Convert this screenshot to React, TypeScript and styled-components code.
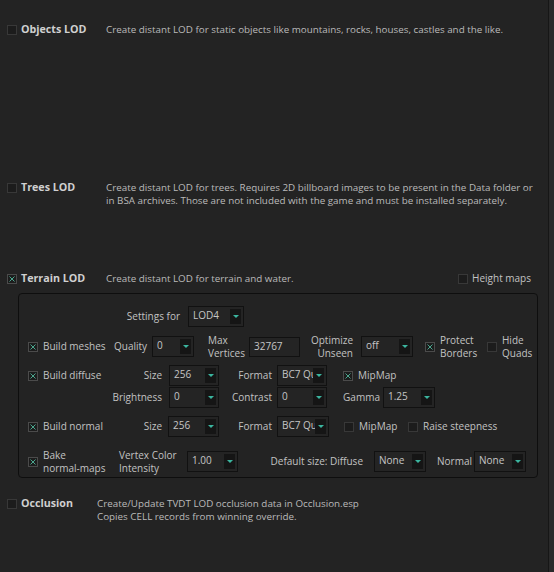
import React from "react";
import styled, { createGlobalStyle } from "styled-components";

const Global = createGlobalStyle`
  html, body { margin: 0; padding: 0; background: #232323; }
  body {
    font-family: "Open Sans", "Noto Sans", sans-serif;
    font-size: 10px;
    color: #c2c2c2;
  }
  #root { width: 554px; height: 572px; }
`;

const Frame = styled.div`
  display: flex;
  width: 554px;
  height: 572px;
  overflow: hidden;
  background: #232323;
`;

const Main = styled.div`
  flex: 0 0 548px;
  display: flex;
  flex-direction: column;
  padding-top: 23px;
  box-sizing: border-box;
`;

const ScrollEdge = styled.div`
  flex: 0 0 6px;
  border-left: 1px solid #161616;
  background: #2a2a2a;
  box-sizing: border-box;
`;

const Section = styled.section<{ $h?: number; $mt?: number }>`
  display: flex;
  flex-direction: column;
  flex-shrink: 0;
  ${(p) => (p.$h ? `height: ${p.$h}px;` : "")}
  ${(p) => (p.$mt ? `margin-top: ${p.$mt}px;` : "")}
`;

const HeaderRow = styled.div`
  display: flex;
  align-items: flex-start;
  padding-left: 7px;
  line-height: 13px;
`;

const Title = styled.div<{ $w: number }>`
  display: flex;
  align-items: center;
  gap: 4px;
  width: ${(p) => p.$w}px;
  height: 13px;
  flex-shrink: 0;
  font-size: 10.7px;
  font-weight: 700;
  color: #d0d0d0;
`;

const Desc = styled.div`
  color: #bababa;
  font-size: 9.83px;
  line-height: 13px;
`;

const Box = styled.span<{ $on?: boolean }>`
  display: inline-flex;
  align-items: center;
  justify-content: center;
  width: 10px;
  height: 10px;
  box-sizing: border-box;
  flex-shrink: 0;
  border: 1px solid ${(p) => (p.$on ? "#4b4b4b" : "#383838")};
  background: #1c1c1c;
`;

const Check = ({ on }: { on?: boolean }) => (
  <Box $on={on}>
    {on && (
      <svg width="6" height="6" viewBox="0 0 6 6">
        <path d="M0.5 0.5 L5.5 5.5 M5.5 0.5 L0.5 5.5" stroke="#4aa58d" strokeWidth="1" />
      </svg>
    )}
  </Box>
);

const HeightMaps = styled.div`
  display: flex;
  align-items: center;
  gap: 4px;
  height: 13px;
  margin-left: auto;
  margin-right: 17px;
  color: #c2c2c2;
`;

const Group = styled.div`
  margin: 8px 0 0 18px;
  width: 520px;
  height: 185px;
  border: 1px solid #0e0e0e;
  border-radius: 4px;
  box-sizing: border-box;
  padding: 12px 0 0 9px;
  display: flex;
  flex-direction: column;
`;

const Row = styled.div<{ $mt?: number }>`
  display: flex;
  align-items: center;
  height: 21px;
  margin-top: ${(p) => p.$mt ?? 0}px;
`;

const CheckItem = styled.div<{ $w?: number; $ml?: number }>`
  display: flex;
  align-items: center;
  gap: 5px;
  flex-shrink: 0;
  ${(p) => (p.$w ? `width: ${p.$w}px;` : "")}
  margin-left: ${(p) => p.$ml ?? 0}px;
  line-height: 13px;
`;

const FieldLabel = styled.div<{ $w: number; $pr?: number; $pl?: number; $left?: boolean }>`
  width: ${(p) => p.$w}px;
  flex-shrink: 0;
  box-sizing: border-box;
  padding-right: ${(p) => p.$pr ?? 0}px;
  padding-left: ${(p) => p.$pl ?? 0}px;
  text-align: ${(p) => (p.$left ? "left" : "right")};
  line-height: 13px;
  white-space: nowrap;
`;

const ComboBox = styled.div<{ $w: number }>`
  width: ${(p) => p.$w}px;
  height: 21px;
  flex-shrink: 0;
  box-sizing: border-box;
  border: 1px solid #111111;
  background: #242424;
  display: flex;
  align-items: stretch;
  overflow: hidden;
`;

const ComboText = styled.span`
  flex: 1;
  min-width: 0;
  padding-left: 4px;
  line-height: 16px;
  color: #c6c6c6;
  white-space: nowrap;
  overflow: hidden;
`;

const DropButton = styled.span`
  flex: 0 0 11px;
  margin: 2px 2px 2px 0;
  background: #151515;
  display: flex;
  align-items: center;
  justify-content: center;
  &::after {
    content: "";
    border-left: 3px solid transparent;
    border-right: 3px solid transparent;
    border-top: 3px solid #3bb59f;
  }
`;

const Combo = ({ w, value }: { w: number; value: string }) => (
  <ComboBox $w={w}>
    <ComboText>{value}</ComboText>
    <DropButton />
  </ComboBox>
);

const TextField = styled.div<{ $w: number }>`
  width: ${(p) => p.$w}px;
  height: 20px;
  flex-shrink: 0;
  box-sizing: border-box;
  border: 1px solid #111111;
  background: #242424;
  padding-left: 4px;
  line-height: 16px;
  color: #c6c6c6;
`;

export default function App() {
  return (
    <>
      <Global />
      <Frame>
        <Main>
          <Section $h={158}>
            <HeaderRow>
              <Title $w={99}>
                <Check />
                Objects LOD
              </Title>
              <Desc>Create distant LOD for static objects like mountains, rocks, houses, castles and the like.</Desc>
            </HeaderRow>
          </Section>

          <Section $h={91}>
            <HeaderRow>
              <Title $w={99}>
                <Check />
                Trees LOD
              </Title>
              <Desc>
                Create distant LOD for trees. Requires 2D billboard images to be present in the Data folder or
                <br />
                in BSA archives. Those are not included with the game and must be installed separately.
              </Desc>
            </HeaderRow>
          </Section>

          <Section>
            <HeaderRow>
              <Title $w={99}>
                <Check on />
                Terrain LOD
              </Title>
              <Desc>Create distant LOD for terrain and water.</Desc>
              <HeightMaps>
                <Check />
                Height maps
              </HeightMaps>
            </HeaderRow>

            <Group>
              <Row>
                <FieldLabel $w={160} $pr={8}>Settings for</FieldLabel>
                <Combo w={56} value="LOD4" />
              </Row>

              <Row $mt={9}>
                <CheckItem $w={86}>
                  <Check on />
                  Build meshes
                </CheckItem>
                <FieldLabel $w={38} $pr={5}>Quality</FieldLabel>
                <Combo w={42} value="0" />
                <FieldLabel $w={55} $pl={14} $left>
                  Max
                  <br />
                  Vertices
                </FieldLabel>
                <TextField $w={51}>32767</TextField>
                <FieldLabel $w={61} $pr={8}>
                  Optimize
                  <br />
                  Unseen
                </FieldLabel>
                <Combo w={52} value="off" />
                <CheckItem $w={62} $ml={12}>
                  <Check on />
                  <span>
                    Protect
                    <br />
                    Borders
                  </span>
                </CheckItem>
                <CheckItem>
                  <Check />
                  <span>
                    Hide
                    <br />
                    Quads
                  </span>
                </CheckItem>
              </Row>

              <Row $mt={8}>
                <CheckItem $w={86}>
                  <Check on />
                  Build diffuse
                </CheckItem>
                <FieldLabel $w={55} $pr={7}>Size</FieldLabel>
                <Combo w={50} value="256" />
                <FieldLabel $w={58} $pr={5}>Format</FieldLabel>
                <Combo w={50} value="BC7 Quality" />
                <CheckItem $ml={16}>
                  <Check on />
                  MipMap
                </CheckItem>
              </Row>

              <Row $mt={1}>
                <FieldLabel $w={141} $pr={7}>Brightness</FieldLabel>
                <Combo w={50} value="0" />
                <FieldLabel $w={58} $pr={5}>Contrast</FieldLabel>
                <Combo w={50} value="0" />
                <FieldLabel $w={56} $pr={3}>Gamma</FieldLabel>
                <Combo w={52} value="1.25" />
              </Row>

              <Row $mt={8}>
                <CheckItem $w={86}>
                  <Check on />
                  Build normal
                </CheckItem>
                <FieldLabel $w={54} $pr={6}>Size</FieldLabel>
                <Combo w={51} value="256" />
                <FieldLabel $w={58} $pr={5}>Format</FieldLabel>
                <Combo w={52} value="BC7 Quality" />
                <CheckItem $w={64} $ml={15}>
                  <Check />
                  MipMap
                </CheckItem>
                <CheckItem>
                  <Check />
                  Raise steepness
                </CheckItem>
              </Row>

              <Row $mt={14}>
                <CheckItem $w={91}>
                  <Check on />
                  <span>
                    Bake
                    <br />
                    normal-maps
                  </span>
                </CheckItem>
                <FieldLabel $w={68} $left>
                  Vertex Color
                  <br />
                  Intensity
                </FieldLabel>
                <Combo w={51} value="1.00" />
                <FieldLabel $w={136} $pr={11}>Default size: Diffuse</FieldLabel>
                <Combo w={52} value="None" />
                <FieldLabel $w={48} $pr={2}>Normal</FieldLabel>
                <Combo w={52} value="None" />
              </Row>
            </Group>
          </Section>

          <Section $mt={19}>
            <HeaderRow>
              <Title $w={90}>
                <Check />
                Occlusion
              </Title>
              <Desc>
                Create/Update TVDT LOD occlusion data in Occlusion.esp
                <br />
                Copies CELL records from winning override.
              </Desc>
            </HeaderRow>
          </Section>
        </Main>
        <ScrollEdge />
      </Frame>
    </>
  );
}
